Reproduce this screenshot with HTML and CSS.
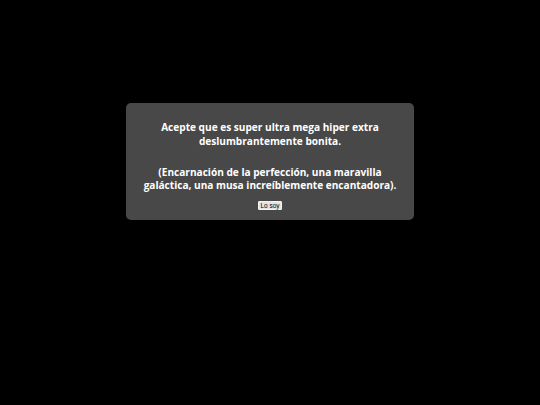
FILE: index.html
```html
<!DOCTYPE html>
<html lang="es">
<head>
<meta charset="utf-8">
<link rel="stylesheet" href="styles.css">
</head>
<body>
<div class="overlay">
  <div class="modal">
    <p class="msg">Acepte que es super ultra mega hiper extra deslumbrantemente bonita.</p>
    <p class="msg">(Encarnación de la perfección, una maravilla galáctica, una musa increíblemente encantadora).</p>
    <button class="btn">Lo soy</button>
  </div>
</div>
</body>
</html>
```
FILE: styles.css
```css
html, body {
  margin: 0;
  padding: 0;
  background: #000;
  height: 100%;
}
.overlay {
  display: flex;
  justify-content: center;
  padding-top: 103px;
}
.modal {
  width: 288px;
  box-sizing: border-box;
  background: #484848;
  border-radius: 5px;
  padding: 18px 12px 10px;
  text-align: center;
  font-family: "Open Sans", sans-serif;
  font-weight: bold;
  font-size: 10.1px;
  line-height: 13.6px;
  color: #fff;
}
.msg {
  margin: 0 0 17.4px;
}
.msg + .msg {
  margin-bottom: 8px;
}
.btn {
  display: block;
  margin: 0 auto;
  width: 24px;
  height: 9px;
  box-sizing: border-box;
  font-family: "Liberation Sans", Arial, sans-serif;
  font-size: 6.5px;
  line-height: 7px;
  padding: 0;
  background: #e4e4e4;
  border: 1px solid #f4f4f4;
  border-radius: 1px;
  color: #000;
  white-space: nowrap;
}
```
